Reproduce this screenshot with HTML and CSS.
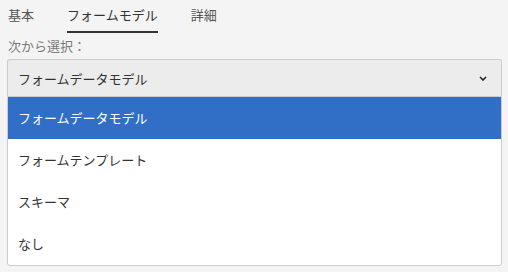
FILE: index.html
```html
<!DOCTYPE html>
<html lang="ja">
<head>
  <meta charset="UTF-8">
  <title>フォームモデル</title>
  <link rel="stylesheet" href="styles.css">
</head>
<body>

  <div id="panel">
    <div class="tabs">
      <span class="tab">基本</span>
      <span class="tab active">フォームモデル</span>
      <span class="tab">詳細</span>
    </div>

    <div class="label">次から選択：</div>

    <div class="select">
      <div class="select-value">
        <span>フォームデータモデル</span>
        <svg class="chevron" width="8" height="5" viewBox="0 0 8 5">
          <path d="M1 1 L4 4 L7 1" fill="none" stroke="#222" stroke-width="1.6"/>
        </svg>
      </div>
      <ul class="options">
        <li class="selected">フォームデータモデル</li>
        <li>フォームテンプレート</li>
        <li>スキーマ</li>
        <li>なし</li>
      </ul>
    </div>
  </div>

</body>
</html>
```

FILE: styles.css
```css
body {
  margin: 0;
  background-color: #f4f4f4;
  font-family: "Noto Sans CJK JP", "Noto Sans", sans-serif;
  font-size: 13px;
  color: #333;
}

#panel {
  padding: 0 6px 0 7px;
}

.tabs {
  display: flex;
  gap: 33px;
  padding-left: 1px;
  height: 33px;
}

.tab {
  line-height: 29px;
  color: #555;
  border-bottom: 2px solid transparent;
  box-sizing: border-box;
  height: 33px;
}

.tab.active {
  color: #333;
  border-bottom-color: #333;
}

.label {
  color: #7a7a7a;
  padding-left: 1px;
  line-height: 26px;
}

.select {
  width: 495px;
}

.select-value {
  display: flex;
  justify-content: space-between;
  align-items: center;
  height: 36px;
  padding: 0 14px 0 10px;
  background-color: #ececec;
  border: 1px solid #ccc;
  border-bottom: none;
  border-radius: 3px 3px 0 0;
}

.chevron {
  margin-top: 1px;
}

.options {
  list-style: none;
  margin: 0;
  padding: 0;
  background-color: #fff;
  border: 1px solid #ccc;
  border-radius: 0 0 3px 3px;
}

.options li {
  height: 42px;
  line-height: 42px;
  padding-left: 10px;
}

.options li.selected {
  background-color: #316ec6;
  color: #fff;
}
```
